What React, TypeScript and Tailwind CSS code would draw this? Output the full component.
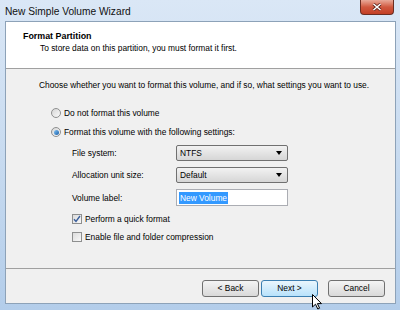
import React from 'react';

const font = { fontFamily: '"Liberation Sans", Arial, sans-serif' };

const Radio: React.FC<{ checked?: boolean; label: string }> = ({ checked, label }) => (
  <div className="flex items-center h-[12px] gap-[3px]">
    <span className="w-[10px] h-[10px] rounded-full border border-[#8e8f8f] bg-gradient-to-br from-[#d5d5d5] to-[#fbfbfb] flex items-center justify-center">
      {checked && <span className="w-[5px] h-[5px] rounded-full bg-gradient-to-br from-[#7fc3f6] to-[#1a5fa6]" />}
    </span>
    <span>{label}</span>
  </div>
);

const Checkbox: React.FC<{ checked?: boolean; label: string }> = ({ checked, label }) => (
  <div className="flex items-center h-[12px] gap-[3px]">
    <span className="w-[10px] h-[10px] border border-[#8e8f8f] bg-gradient-to-br from-[#dcdcdc] to-[#f8f8f8] flex items-center justify-center">
      {checked && (
        <svg width="8" height="8" viewBox="0 0 8 8">
          <path d="M1 4.2 L3 6.5 L7 1" fill="none" stroke="#3a5f9c" strokeWidth="1.4" />
        </svg>
      )}
    </span>
    <span>{label}</span>
  </div>
);

const Combo: React.FC<{ value: string }> = ({ value }) => (
  <div className="w-[112px] h-[16px] border border-[#707070] rounded-[2px] bg-gradient-to-b from-[#f2f2f2] to-[#d6d6d6] flex items-center justify-between pl-[3px] pr-[5px]">
    <span>{value}</span>
    <svg width="6" height="4" viewBox="0 0 6 4">
      <path d="M0 0 H6 L3 4 Z" fill="#000" />
    </svg>
  </div>
);

const Button: React.FC<{ label: string; hot?: boolean }> = ({ label, hot }) => (
  <div
    className={
      hot
        ? 'w-[57px] h-[17px] rounded-[3px] border border-[#3c7fb1] bg-gradient-to-b from-[#eaf6fd] to-[#b8e2fb] flex items-center justify-center'
        : 'w-[57px] h-[17px] rounded-[3px] border border-[#707070] bg-gradient-to-b from-[#f4f4f4] to-[#d9d9d9] flex items-center justify-center'
    }
  >
    {label}
  </div>
);

const Cursor = () => (
  <svg className="absolute left-[312px] top-[294px]" width="11" height="16" viewBox="0 0 11 16">
    <path d="M0.5 0.5 V13 L3.5 10.2 L5.8 15 L7.6 14.2 L5.4 9.6 H9.5 Z" fill="#fff" stroke="#000" strokeWidth="1" />
  </svg>
);

export default function App() {
  return (
    <div
      className="relative w-[400px] h-[310px] overflow-hidden flex flex-col bg-gradient-to-b from-[#dae7f6] via-[#c8dbf0] to-[#b3cdea] text-[8.4px] text-black"
      style={font}
    >
      {/* title bar */}
      <div className="h-[21px] flex items-start justify-between pl-[5px] pr-[6px]">
        <span className="text-[10.2px] mt-[4px] text-[#111]">New Simple Volume Wizard</span>
        <div className="w-[34px] h-[15px] rounded-b-[4px] border border-t-0 border-[#6b2d22] bg-gradient-to-b from-[#e8a999] via-[#d0583f] to-[#c33f25] flex items-center justify-center">
          <svg width="10" height="8" viewBox="0 0 10 8">
            <path d="M1.5 1 L8.5 7 M8.5 1 L1.5 7" stroke="#5a2018" strokeWidth="3" />
            <path d="M1.5 1 L8.5 7 M8.5 1 L1.5 7" stroke="#fff" strokeWidth="1.6" />
          </svg>
        </div>
      </div>

      {/* client area */}
      <div className="flex-1 ml-[5px] mr-[4px] mb-[6px] border border-[#8da2b8] flex flex-col bg-[#f0f0f0]">
        <div className="h-[47px] bg-white border-b border-[#a0a0a0] pl-[17px] pt-[9px]">
          <div className="font-bold text-[8.9px] leading-[11px]">Format Partition</div>
          <div className="pl-[17px] leading-[11px] mt-[1px]">To store data on this partition, you must format it first.</div>
        </div>

        <div className="flex-1 flex flex-col pl-[33px] pt-[10px] leading-[12px]">
          <div className="h-[12px] flex items-center">
            Choose whether you want to format this volume, and if so, what settings you want to use.
          </div>
          <div className="pl-[12px] mt-[16px] flex flex-col gap-[7px]">
            <Radio label="Do not format this volume" />
            <Radio checked label="Format this volume with the following settings:" />
          </div>
          <div className="pl-[33px] mt-[7px] flex flex-col">
            <div className="grid grid-cols-[104px_112px] gap-y-[6px] items-center">
              <span>File system:</span>
              <Combo value="NTFS" />
              <span>Allocation unit size:</span>
              <Combo value="Default" />
              <span>Volume label:</span>
              <div className="w-[112px] h-[17px] border border-[#abadb3] bg-white flex items-center pl-[2px]">
                <span className="bg-[#3399ff] text-white px-[1px]">New Volume</span>
              </div>
            </div>
            <div className="mt-[7px] flex flex-col gap-[6px]">
              <Checkbox checked label="Perform a quick format" />
              <Checkbox label="Enable file and folder compression" />
            </div>
          </div>
        </div>

        <div className="h-[35px] border-t border-[#a0a0a0] flex justify-end items-start pt-[11px] pr-[10px]">
          <Button label="< Back" />
          <div className="ml-[2px]">
            <Button label="Next >" hot />
          </div>
          <div className="ml-[10px]">
            <Button label="Cancel" />
          </div>
        </div>
      </div>

      <Cursor />
    </div>
  );
}
